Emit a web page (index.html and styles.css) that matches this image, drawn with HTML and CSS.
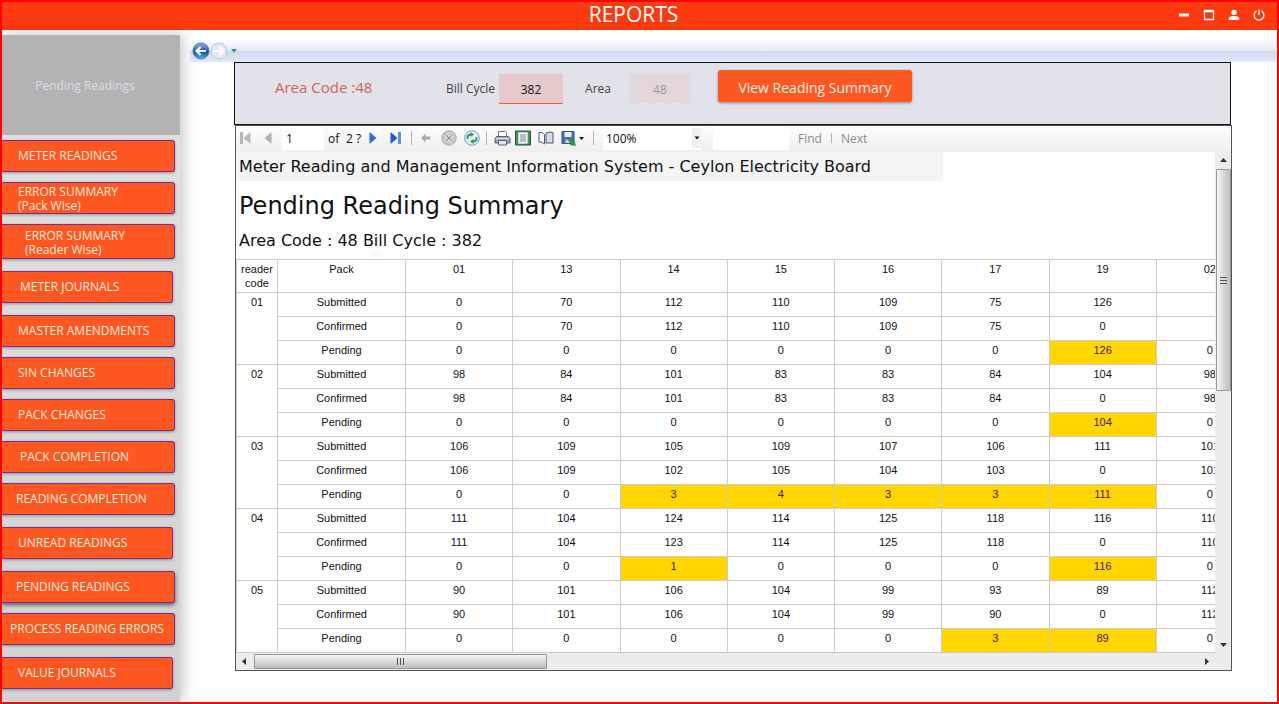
FILE: index.html
```
<!DOCTYPE html>
<html lang="en">
<head>
<meta charset="utf-8">
<title>Reports</title>
<link rel="stylesheet" href="styles.css">
</head>
<body>
<div class="window">
  <header class="titlebar">
    <h1 class="titlebar-title">REPORTS</h1>
    <div class="window-controls">
      <button type="button" aria-label="Minimize"><svg width="12" height="12" viewBox="0 0 12 12"><path d="M1 6h10" stroke="#fff" stroke-width="3"/></svg></button>
      <button type="button" aria-label="Maximize"><svg width="12" height="12" viewBox="0 0 12 12"><path d="M1.500 1.500h9v9h-9zM1 2.500h10" fill="none" stroke="#fff" stroke-width="1.300"/></svg></button>
      <button type="button" aria-label="User"><svg width="12" height="12" viewBox="0 0 12 12"><circle cx="6" cy="3.400" r="2.700" fill="#fff"/><path d="M.8 11V9.600C.8 7.800 3.500 7 6 7s5.200.800 5.200 2.600V11z" fill="#fff"/></svg></button>
      <button type="button" aria-label="Log off"><svg width="12" height="12" viewBox="0 0 12 12"><path d="M3.500 2a4.900 4.900 0 1 0 5 0M6 .500v5.500" fill="none" stroke="#fff" stroke-width="1.300"/></svg></button>
    </div>
  </header>

  <div class="content">
    <aside class="sidebar">
      <div class="sidebar-current">Pending Readings</div>
      <nav class="menu">
        <button type="button">METER READINGS</button>
        <button type="button" class="two-line">ERROR SUMMARY<br>(Pack Wise)</button>
        <button type="button" class="two-line tall inset">ERROR SUMMARY<br>(Reader Wise)</button>
        <button type="button" class="spaced short indent">METER JOURNALS</button>
        <button type="button" class="spaced">MASTER AMENDMENTS</button>
        <button type="button">SIN CHANGES</button>
        <button type="button">PACK CHANGES</button>
        <button type="button" class="indent">PACK COMPLETION</button>
        <button type="button" class="outdent">READING COMPLETION</button>
        <button type="button" class="spaced short">UNREAD READINGS</button>
        <button type="button" class="spaced outdent active">PENDING READINGS</button>
        <button type="button" class="wide">PROCESS READING ERRORS</button>
        <button type="button" class="spaced short">VALUE JOURNALS</button>
      </nav>
    </aside>

    <main class="main">
      <div class="navstrip">
        <button type="button" aria-label="Back">
          <svg width="18" height="18" viewBox="0 0 18 18"><defs><linearGradient id="blue" x1="0" y1="0" x2="0" y2="1"><stop offset="0" stop-color="#8db4df"/><stop offset=".45" stop-color="#2c67b4"/><stop offset=".55" stop-color="#164a98"/><stop offset="1" stop-color="#48c4f4"/></linearGradient></defs><circle cx="9" cy="9" r="8" fill="url(#blue)" stroke="#4a7dbb"/><path d="M14 9H5M8.500 5L4.500 9l4 4" fill="none" stroke="#fff" stroke-width="2.200"/></svg>
        </button>
        <button type="button" aria-label="Forward">
          <svg width="18" height="18" viewBox="0 0 18 18"><circle cx="9" cy="9" r="8" fill="#e3e8f1" stroke="#bcc7da"/><path d="M4 9h9M9.500 5l4 4-4 4" fill="none" stroke="#fff" stroke-width="2.200"/></svg>
        </button>
        <button type="button" class="history" aria-label="History"><svg width="6" height="4" viewBox="0 0 6 4"><path d="M0 0h6L3 3.500z" fill="#2a86b8"/></svg></button>
      </div>

      <form class="filters">
        <p class="area-code">Area Code :48</p>
        <label for="cycle">Bill Cycle</label>
        <input id="cycle" class="cycle" type="text" value="382">
        <label for="area">Area</label>
        <input id="area" class="area" type="text" value="48" disabled>
        <button type="button" class="view">View Reading Summary</button>
      </form>

      <section class="viewer">
        <div class="toolbar">
          <button type="button" class="w18" aria-label="First page"><svg width="11" height="14" viewBox="0 0 11 14"><path d="M0 1h3v12H0zM10.500 1v12L3.500 7z" fill="#b5b8bb"/></svg></button>
          <button type="button" class="w28" aria-label="Previous page"><svg width="8" height="14" viewBox="0 0 8 14"><path d="M7.500 1v12L.5 7z" fill="#b0b3b6"/></svg></button>
          <input class="page" type="text" value="1" aria-label="Current page">
          <span class="of">of</span><span class="total">2 ?</span>
          <button type="button" class="w22" aria-label="Next page"><svg width="8" height="14" viewBox="0 0 8 14"><path d="M.5 1v12l7-6z" fill="#2d6be0"/></svg></button>
          <button type="button" class="w22" aria-label="Last page"><svg width="11" height="14" viewBox="0 0 11 14"><path d="M.5 1v12l7-6z" fill="#2457cf"/><path d="M8 1h3v12H8z" fill="#5a92ee"/></svg></button>
          <i class="sep"></i>
          <button type="button" class="w18" aria-label="Back to parent"><svg width="10" height="10" viewBox="0 0 10 10"><path d="M0 5l4.500-4.500V3.500H9.500v3h-5v3z" fill="#a9adb0"/></svg></button>
          <button type="button" class="w28" aria-label="Stop"><svg width="16" height="16" viewBox="0 0 16 16"><circle cx="8" cy="8" r="7.200" fill="#c9c9c9" stroke="#a9a9a9"/><path d="M5 5l6 6M11 5l-6 6" stroke="#f4f4f4" stroke-width="3"/><path d="M5 5l6 6M11 5l-6 6" stroke="#8c8c8c" stroke-width="1.200"/></svg></button>
          <button type="button" class="w18" aria-label="Refresh"><svg width="16" height="16" viewBox="0 0 16 16"><circle cx="8" cy="8" r="7.300" fill="#e4f0fb" stroke="#6c9fce"/><path d="M3.500 9V7.500Q3.500 4.500 7 4.500M12.500 7v1.500Q12.500 11.500 9 11.500" fill="none" stroke="#2ca04a" stroke-width="1.800"/><path d="M6.500 2v5L10 4.500zM9.500 9v5L6 11.500z" fill="#2ca04a"/></svg></button>
          <i class="sep"></i>
          <button type="button" class="w20" aria-label="Print"><svg width="17" height="16" viewBox="0 0 17 16"><path d="M4.500 7V1.500h7l1 1V7" fill="#fff" stroke="#6d7a90"/><path d="M2.500 6.500h12l1.500 2v4.500H1V8.500z" fill="#a7abb3" stroke="#5b6069"/><path d="M2 8.500h13" stroke="#dfe2e7"/><path d="M4.500 10.500h8v4.500h-8z" fill="#dbe8fb" stroke="#50648c"/></svg></button>
          <button type="button" class="w22" aria-label="Print layout"><svg width="16" height="16" viewBox="0 0 16 16"><path d="M.5 1h15v14H.5z" fill="#4a9360" stroke="#22543a"/><path d="M3.500 2.500h9v11h-9z" fill="#fff" stroke="#b9d0bf"/><path d="M5 5h6M5 7h6M5 9h6M5 11h6" stroke="#5b7f9f"/></svg></button>
          <button type="button" class="w24" aria-label="Page setup"><svg width="16" height="14" viewBox="0 0 16 14"><path d="M1 1.500Q4 .500 6.500 3.500v9.500Q4 10.500 1 11z" fill="#fff" stroke="#51596b"/><path d="M8 2Q11 .500 15 1.500V12H8z" fill="#cfdcf0" stroke="#51596b"/></svg></button>
          <button type="button" class="w30" aria-label="Export"><svg width="24" height="16" viewBox="0 0 24 16"><path d="M1 1.500h12v12H1z" fill="#4a6cb8" stroke="#344f92"/><path d="M3.500 2h7v5h-7z" fill="#eef2fa"/><path d="M4.500 9.500h5V13h-5z" fill="#c9d4ea"/><path d="M8 8.500l3.500 3 1.500-1.500 1.500 5.500-5.500-.500 1.500-1.500-3-2.500z" fill="#32a83c" stroke="#1c7a2a" stroke-width=".5"/><path d="M18 7h5l-2.500 3z" fill="#111"/></svg></button>
          <i class="sep"></i>
          <span class="zoom">
            <select aria-label="Zoom"><option>100%</option></select>
            <svg class="zoom-arrow" width="10" height="20" viewBox="0 0 10 20"><path d="M0 0h10v20H0z" fill="#f1f1f1"/><path d="M2.500 8.500h5l-2.500 3z" fill="#111"/></svg>
          </span>
          <input class="find" type="text" aria-label="Find text">
          <button type="button" class="text-button" disabled>Find</button>
          <i class="sep light"></i>
          <button type="button" class="text-button" disabled>Next</button>
        </div>

        <div class="report">
          <div class="page-area">
            <p class="system">Meter Reading and Management Information System - Ceylon Electricity Board</p>
            <h2 class="report-title">Pending Reading Summary</h2>
            <p class="report-sub">Area Code : 48 Bill Cycle : 382</p>
            <table class="readings">
              <colgroup><col class="c-reader"><col class="c-pack"><col span="8"></colgroup>
              <thead>
                <tr><th>reader code</th><th>Pack</th><th>01</th><th>13</th><th>14</th><th>15</th><th>16</th><th>17</th><th>19</th><th>02</th></tr>
              </thead>
              <tbody>
                <tr><th rowspan="3">01</th><th>Submitted</th><td>0</td><td>70</td><td>112</td><td>110</td><td>109</td><td>75</td><td>126</td><td></td></tr>
                <tr><th>Confirmed</th><td>0</td><td>70</td><td>112</td><td>110</td><td>109</td><td>75</td><td>0</td><td></td></tr>
                <tr><th>Pending</th><td>0</td><td>0</td><td>0</td><td>0</td><td>0</td><td>0</td><td class="due">126</td><td>0</td></tr>
                <tr><th rowspan="3">02</th><th>Submitted</th><td>98</td><td>84</td><td>101</td><td>83</td><td>83</td><td>84</td><td>104</td><td>98</td></tr>
                <tr><th>Confirmed</th><td>98</td><td>84</td><td>101</td><td>83</td><td>83</td><td>84</td><td>0</td><td>98</td></tr>
                <tr><th>Pending</th><td>0</td><td>0</td><td>0</td><td>0</td><td>0</td><td>0</td><td class="due">104</td><td>0</td></tr>
                <tr><th rowspan="3">03</th><th>Submitted</th><td>106</td><td>109</td><td>105</td><td>109</td><td>107</td><td>106</td><td>111</td><td>101</td></tr>
                <tr><th>Confirmed</th><td>106</td><td>109</td><td>102</td><td>105</td><td>104</td><td>103</td><td>0</td><td>101</td></tr>
                <tr><th>Pending</th><td>0</td><td>0</td><td class="due">3</td><td class="due">4</td><td class="due">3</td><td class="due">3</td><td class="due">111</td><td>0</td></tr>
                <tr><th rowspan="3">04</th><th>Submitted</th><td>111</td><td>104</td><td>124</td><td>114</td><td>125</td><td>118</td><td>116</td><td>110</td></tr>
                <tr><th>Confirmed</th><td>111</td><td>104</td><td>123</td><td>114</td><td>125</td><td>118</td><td>0</td><td>110</td></tr>
                <tr><th>Pending</th><td>0</td><td>0</td><td class="due">1</td><td>0</td><td>0</td><td>0</td><td class="due">116</td><td>0</td></tr>
                <tr><th rowspan="3">05</th><th>Submitted</th><td>90</td><td>101</td><td>106</td><td>104</td><td>99</td><td>93</td><td>89</td><td>112</td></tr>
                <tr><th>Confirmed</th><td>90</td><td>101</td><td>106</td><td>104</td><td>99</td><td>90</td><td>0</td><td>112</td></tr>
                <tr><th>Pending</th><td>0</td><td>0</td><td>0</td><td>0</td><td>0</td><td class="due">3</td><td class="due">89</td><td>0</td></tr>
              </tbody>
            </table>
          </div>

          <div class="vscroll">
            <svg width="7" height="4" viewBox="0 0 7 4"><path d="M0 4l3.500-4L7 4z" fill="#333"/></svg>
            <div class="vthumb"><i></i><i></i><i></i></div>
            <svg width="7" height="4" viewBox="0 0 7 4"><path d="M0 0h7L3.500 4z" fill="#333"/></svg>
          </div>
          <div class="hscroll">
            <svg width="4" height="7" viewBox="0 0 4 7"><path d="M4 0v7L0 3.500z" fill="#333"/></svg>
            <div class="hthumb"><i></i><i></i><i></i></div>
            <svg width="4" height="7" viewBox="0 0 4 7"><path d="M0 0v7l4-3.500z" fill="#333"/></svg>
          </div>
        </div>
      </section>
    </main>
  </div>
</div>
</body>
</html>
```
FILE: styles.css
```
* { box-sizing: border-box; }

body {
  margin: 0;
  background: #fff;
  font-family: "Open Sans", "Noto Sans", sans-serif;
  font-size: 12px;
  color: #111;
}

h1, h2, p { margin: 0; font-weight: 400; }

button, input, select {
  margin: 0;
  padding: 0;
  border: 0;
  font: inherit;
  color: inherit;
}

button { background: none; }
svg { display: block; }

.window {
  display: flex;
  flex-direction: column;
  min-height: 100vh;
  border: 2px solid #f00;
  border-bottom-color: #e60c0c;
  overflow: hidden;
}

/* Title bar */
.titlebar {
  display: grid;
  grid-template-columns: 1fr auto 1fr;
  align-items: center;
  height: 28px;
  padding: 0 12px 3px 0;
  background: #fb3a10;
  color: #fff;
}

.titlebar-title {
  grid-column: 2;
  font-size: 21px;
  line-height: 25px;
}

.window-controls {
  display: flex;
  justify-content: flex-end;
  gap: 13px;
}

.content {
  display: flex;
  flex: 1;
}

/* Sidebar */
.sidebar {
  width: 178px;
  flex: none;
  margin-top: 5px;
  padding-bottom: 13px;
  background: linear-gradient(#e2e2e2, #d2d2d2);
  box-shadow: 2px 0 14px rgba(0, 0, 0, .25);
}

.sidebar-current {
  display: flex;
  align-items: center;
  justify-content: center;
  height: 100px;
  padding-right: 12px;
  background: #b3b3b3;
  color: #dcdce8;
}

.menu {
  display: flex;
  flex-direction: column;
  gap: 10px;
  padding: 5px 5px 0 0;
}

.menu button {
  height: 32px;
  padding-left: 16px;
  border: 1px solid #7a2d8c;
  border-left: 0;
  border-radius: 0 3px 3px 0;
  background: #ff5722;
  box-shadow: 0 1px 3px rgba(0, 0, 0, .35);
  color: #ffeade;
  line-height: 14px;
  text-align: left;
  white-space: nowrap;
}

.menu .spaced { margin-top: 2px; }
.menu .short { margin-right: 2px; }
.menu .indent { padding-left: 18px; }
.menu .inset { padding-left: 23px; }
.menu .outdent { padding-left: 14px; }
.menu .wide { padding-left: 8px; }
.menu .two-line { padding-top: 2px; }
.menu .tall { height: 35px; }
.menu .active { box-shadow: 0 2px 4px rgba(0, 0, 0, .6); }

/* Main column */
.main {
  flex: 1;
  min-width: 0;
  padding: 8px 0 31px 10px;
  display: flex;
  flex-direction: column;
}

.navstrip {
  display: flex;
  align-items: center;
  height: 24px;
  padding: 2px 0 0 2px;
  background: linear-gradient(#fff, #e4eaf7 54%, #d0d9ed 56%, #e4e9f8);
}

.history { margin-left: 3px; }

.filters {
  display: flex;
  align-items: center;
  height: 63px;
  margin: 0 46px 0 44px;
  padding: 0 0 9px 40px;
  border: 1px solid #111;
  background: #e1e2ea;
  color: #444;
}

.area-code {
  width: 171px;
  margin-bottom: 5px;
  color: #d0635c;
  font-size: 15px;
  line-height: 20px;
}

.filters label { margin-bottom: 2px; }

.filters input {
  height: 30px;
  padding-top: 2px;
  text-align: center;
}

.filters .cycle {
  width: 64px;
  margin: 0 22px 0 4px;
  border-bottom: 1px solid #f2602f;
  background: #e7c9cb;
  color: #111;
}

.filters .area {
  width: 60px;
  margin: 0 28px 0 19px;
  border-bottom: 1px dashed #e9e2e8;
  background: #e3d7dd;
  color: #999;
}

.view {
  height: 32px;
  width: 194px;
  margin-bottom: 6px;
  padding-top: 2px;
  border-radius: 3px;
  background: #ff5722;
  box-shadow: 0 1px 3px rgba(0, 0, 0, .4);
  color: #ffeee4;
  font-size: 14px;
}

/* Report viewer */
.viewer {
  margin: 0 45px 0 45px;
  border: 1px solid #555;
  background: #fff;
}

.toolbar {
  display: flex;
  align-items: center;
  height: 26px;
  padding-bottom: 2px;
  background: linear-gradient(#fdfdfd, #efefef);
}

.toolbar button {
  display: flex;
  flex: none;
  align-items: center;
  justify-content: center;
}

.w18 { width: 18px; }
.w20 { width: 20px; }
.w22 { width: 22px; }
.w24 { width: 24px; }
.w28 { width: 28px; }
.w30 { width: 30px; }

.page {
  width: 42px;
  height: 24px;
  padding-left: 4px;
  background: #fff;
}

.of { width: 22px; padding-left: 4px; }
.total { width: 16px; white-space: nowrap; }

.sep {
  width: 1px;
  height: 14px;
  margin: 0 5px;
  background: #b5b5b5;
}

.sep.light { height: 10px; margin: 0 9px; }

.zoom {
  display: flex;
  width: 99px;
  margin-left: 4px;
  background: #fff;
}

.zoom select {
  flex: 1;
  height: 24px;
  padding-left: 3px;
  appearance: none;
  background: #fff;
}

.zoom-arrow { align-self: center; }

.find {
  width: 76px;
  height: 24px;
  margin: 0 9px 0 11px;
  background: #fff;
}

.text-button { color: #8a8a8a; }

.report {
  display: grid;
  grid-template-columns: minmax(0, 1fr) 16px;
  grid-template-rows: auto 17px;
}

.page-area {
  overflow: hidden;
  font-family: "DejaVu Sans", sans-serif;
}

.system {
  width: 707px;
  padding-left: 3px;
  background: #f4f4f4;
  font-size: 16px;
  line-height: 29px;
}

.report-title {
  padding: 10px 0 0 3px;
  font-size: 24px;
  line-height: 30px;
}

.report-sub {
  padding: 10px 0 8px 3px;
  font-size: 16px;
  line-height: 20px;
}

.readings {
  width: 1028px;
  table-layout: fixed;
  border-collapse: collapse;
  font: 11px/14px "Liberation Sans", Arial, sans-serif;
}

.c-reader { width: 41px; }
.c-pack { width: 128px; }

.readings th,
.readings td {
  height: 24px;
  padding: 2px 0;
  border: 1px solid #ccc;
  font-weight: 400;
  text-align: center;
  vertical-align: top;
}

.readings thead th { height: 33px; padding: 2px 2px; }
.readings .due { background: #ffd600; color: #3d2060; }

/* Scroll bars */
.vscroll, .hscroll {
  display: flex;
  align-items: center;
  justify-content: space-between;
  background: #ececec;
}

.vscroll {
  flex-direction: column;
  padding: 6px 0;
}

.vthumb, .hthumb {
  display: flex;
  align-items: center;
  justify-content: center;
  gap: 2px;
  border: 1px solid #979797;
  border-radius: 1px;
}

.vthumb {
  flex-direction: column;
  width: 15px;
  height: 222px;
  margin: 7px 0 auto;
  background: linear-gradient(90deg, #f6f6f6, #d9d9db 50%, #c0c0c4);
}

.vthumb i { width: 7px; height: 1px; background: #555; }

.hscroll {
  grid-column: 1 / -1;
  padding: 0 22px 0 6px;
}

.hthumb {
  width: 293px;
  height: 15px;
  margin: 0 auto 0 8px;
  background: linear-gradient(#f4f4f4, #dadadc 50%, #bdbdc1);
}

.hthumb i { width: 1px; height: 7px; background: #555; }
```
